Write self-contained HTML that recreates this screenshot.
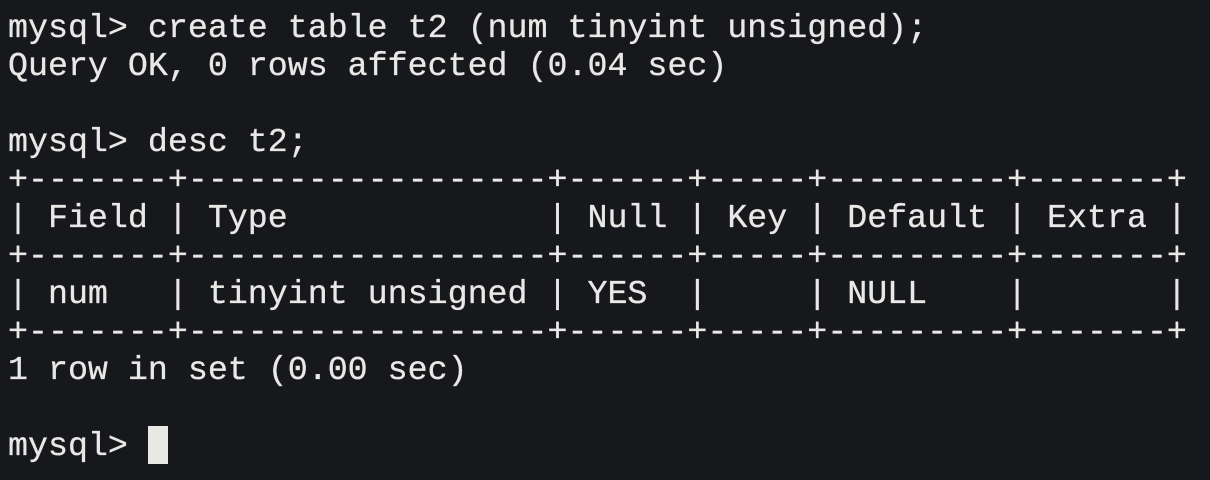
<!DOCTYPE html><html><head><style>
html,body{margin:0;padding:0;background:#17181b;width:1210px;height:480px;overflow:hidden}
pre{margin:0;position:absolute;left:8px;top:9px;font-family:"Liberation Mono","DejaVu Sans Mono",monospace;font-size:33.3px;line-height:38px;color:#e8e8e6;-webkit-text-stroke:0.3px #e8e8e6}
.c{display:inline-block;width:20px;height:38px;background:#e8e8e4;vertical-align:top;margin-top:-1px}
</style></head><body><pre>mysql&gt; create table t2 (num tinyint unsigned);
Query OK, 0 rows affected (0.04 sec)

mysql&gt; desc t2;
+-------+------------------+------+-----+---------+-------+
| Field | Type             | Null | Key | Default | Extra |
+-------+------------------+------+-----+---------+-------+
| num   | tinyint unsigned | YES  |     | NULL    |       |
+-------+------------------+------+-----+---------+-------+
1 row in set (0.00 sec)

mysql&gt; <span class="c"></span></pre></body></html>
